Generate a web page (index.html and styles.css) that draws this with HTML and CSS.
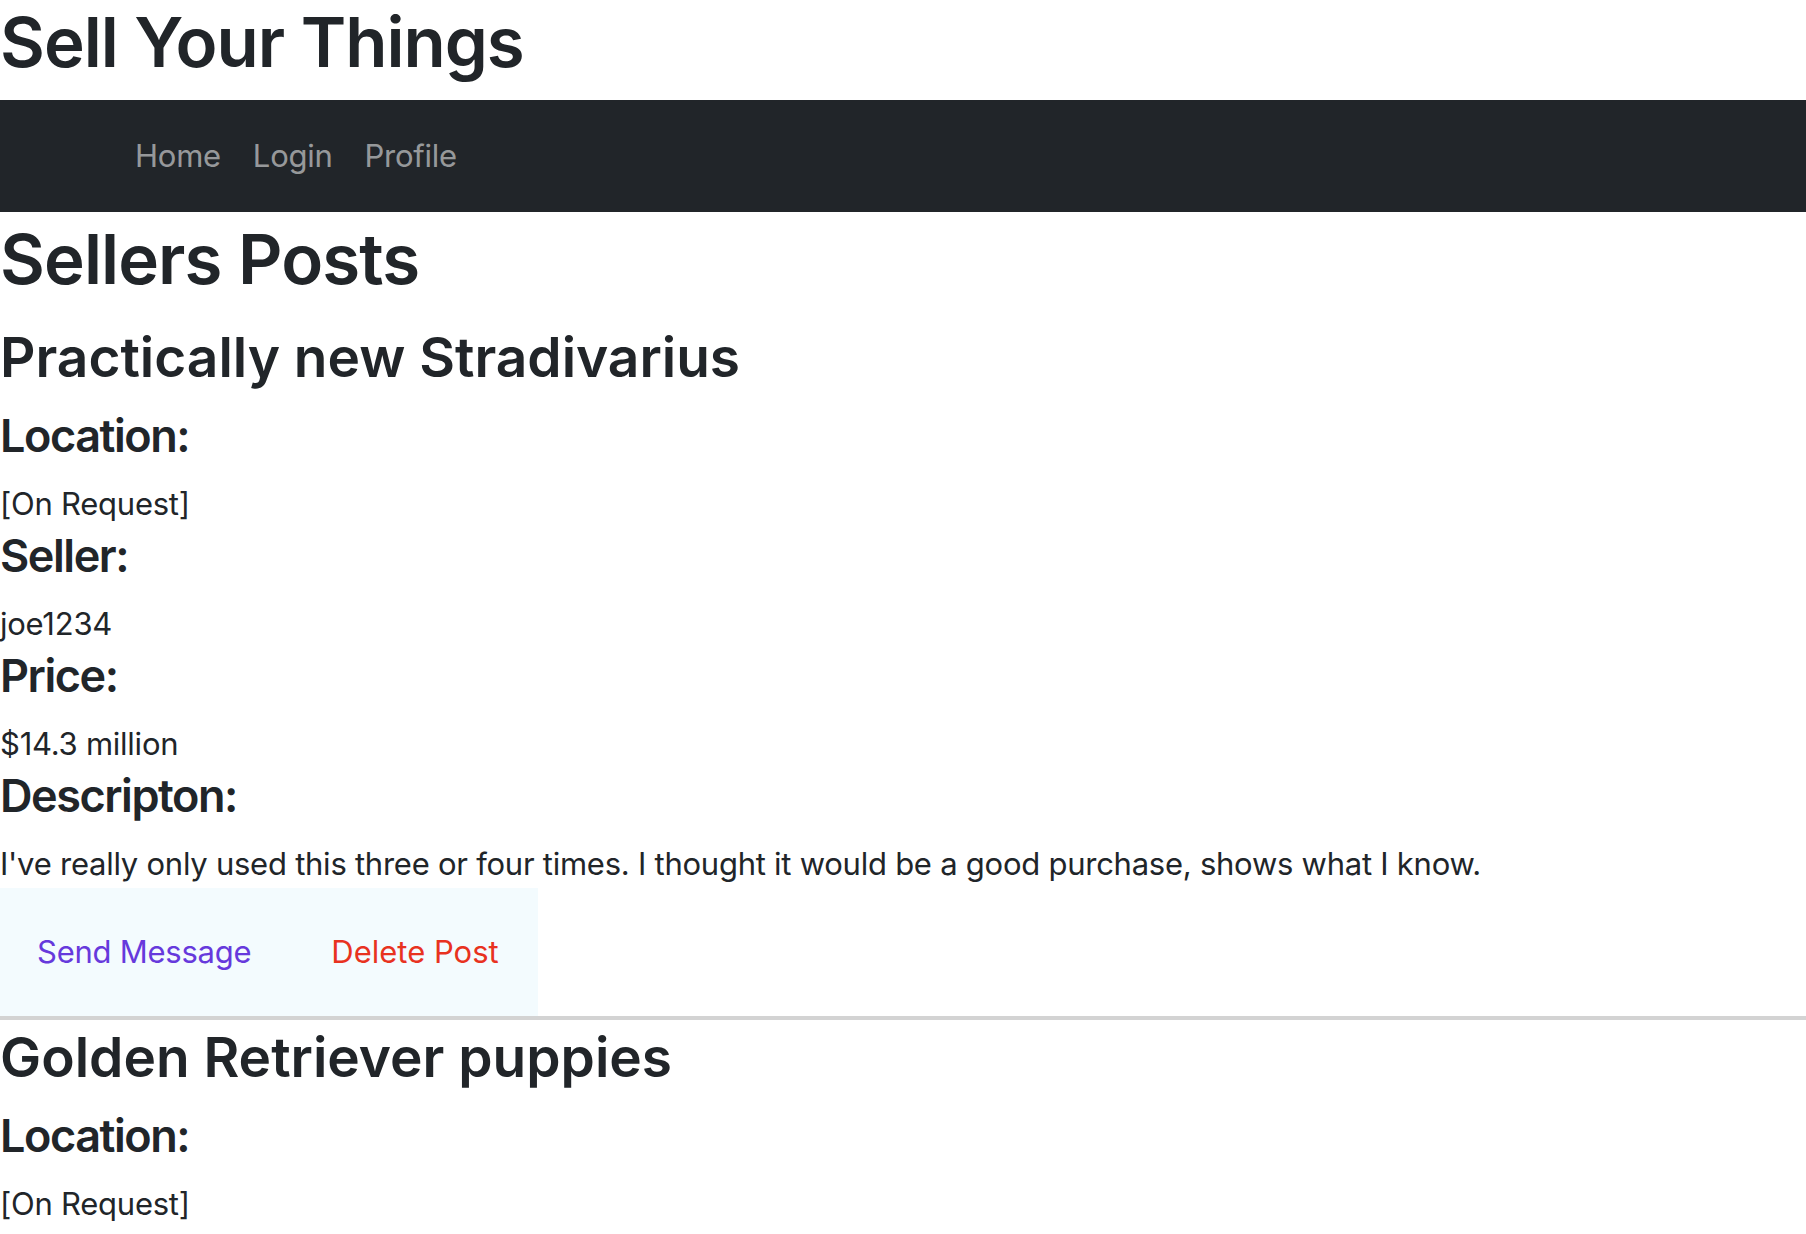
FILE: index.html
```html
<!DOCTYPE html>
<html lang="en">
<head>
<meta charset="utf-8">
<title>Sell Your Things</title>
<link rel="stylesheet" href="styles.css">
</head>
<body>
<h1 class="site-title">Sell Your Things</h1>
<nav class="navbar">
  <ul class="nav-list">
    <li><a class="nav-link" href="#">Home</a></li>
    <li><a class="nav-link" href="#">Login</a></li>
    <li><a class="nav-link" href="#">Profile</a></li>
  </ul>
</nav>
<main class="content">
  <h1 class="page-title">Sellers Posts</h1>
  <article class="post">
    <h2 class="post-title">Practically new Stradivarius</h2>
    <h4 class="field-label">Location:</h4>
    <p class="field-value">[On Request]</p>
    <h4 class="field-label">Seller:</h4>
    <p class="field-value">joe1234</p>
    <h4 class="field-label">Price:</h4>
    <p class="field-value">$14.3 million</p>
    <h4 class="field-label">Descripton:</h4>
    <p class="field-value">I've really only used this three or four times. I thought it would be a good purchase, shows what I know.</p>
    <div class="actions">
      <a class="action action-message" href="#">Send Message</a>
      <a class="action action-delete" href="#">Delete Post</a>
    </div>
  </article>
  <article class="post">
    <h2 class="post-title">Golden Retriever puppies</h2>
    <h4 class="field-label">Location:</h4>
    <p class="field-value">[On Request]</p>
    <h4 class="field-label">Seller:</h4>
    <p class="field-value">joe1234</p>
  </article>
</main>
</body>
</html>
```
FILE: styles.css
```css
* { box-sizing: border-box; }
html, body {
  margin: 0;
  padding: 0;
  background: #ffffff;
}
body {
  font-family: "Inter", "Liberation Sans", sans-serif;
  color: #212529;
  font-size: 31px;
  line-height: 48px;
  letter-spacing: -0.25px;
  height: 1234px;
  overflow: hidden;
}
h1, h2, h4, p { margin: 0; }

.site-title {
  font-size: 69px;
  line-height: 84px;
  font-weight: 600;
  letter-spacing: -1px;
  margin-bottom: 16px;
}

.navbar {
  background: #212529;
  padding: 16px 0 16px 119px;
}
.nav-list {
  list-style: none;
  margin: 0;
  padding: 0;
  display: flex;
}
.nav-link {
  display: block;
  padding: 16px;
  color: rgba(255, 255, 255, 0.55);
  text-decoration: none;
  font-size: 31px;
  line-height: 48px;
}

.content { padding-top: 5px; }

.page-title {
  font-size: 69px;
  line-height: 85px;
  font-weight: 600;
  letter-spacing: -0.9px;
  margin-bottom: 18px;
}

.post {
  padding-top: 2px;
  border-bottom: 4px solid #d3d3d3;
}

.post-title {
  font-size: 55px;
  line-height: 70px;
  font-weight: 600;
  letter-spacing: 0;
  margin-bottom: 16px;
}

.field-label {
  font-size: 45px;
  line-height: 56px;
  font-weight: 600;
  letter-spacing: -1.45px;
  margin-bottom: 16px;
}

.field-value {
  font-size: 31px;
  line-height: 48px;
}

.actions {
  display: flex;
  width: 538px;
  background: #f3fbfe;
  padding: 40px 0 40px 37px;
  gap: 80px;
}
.action {
  font-size: 31px;
  line-height: 48px;
  text-decoration: none;
}
.action-message { color: #6639dc; }
.action-delete { color: #e8321f; letter-spacing: 0; }
```
